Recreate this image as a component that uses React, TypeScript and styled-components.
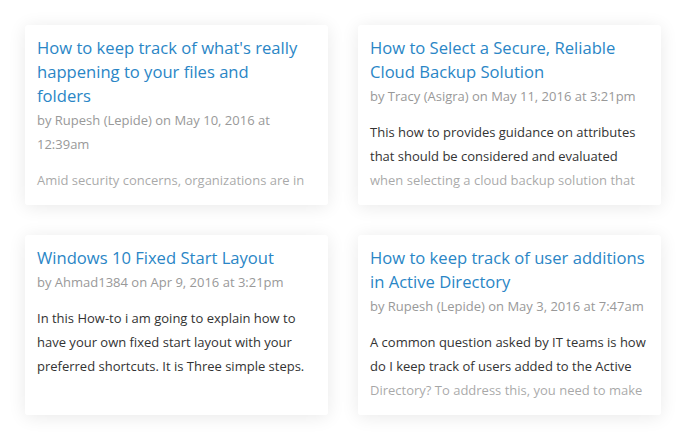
import styled, { createGlobalStyle } from "styled-components";

const GlobalStyle = createGlobalStyle`
  html, body {
    margin: 0;
    padding: 0;
    background: #ffffff;
  }
  body {
    font-family: "Open Sans", "Liberation Sans", sans-serif;
  }
`

const Grade = styled.div`
  display: grid;
  grid-template-columns: 303px 303px;
  grid-auto-rows: 180px;
  gap: 30px;
  padding: 25px;
`

const Cartao = styled.article`
  position: relative;
  overflow: hidden;
  background: #ffffff;
  border-radius: 3px;
  padding: 11px 12px;
  box-shadow: 0 2px 18px rgba(0, 0, 0, 0.09);

  &::after {
    content: '';
    position: absolute;
    left: 0;
    right: 0;
    bottom: 0;
    height: 36px;
    background: linear-gradient(
      to bottom,
      rgba(255, 255, 255, 0.55) 0px,
      rgba(255, 255, 255, 0.6) 24px,
      #ffffff 24px
    );
  }
`

const Titulo = styled.h3`
  margin: 0;
  font-size: 16.6px;
  font-weight: 400;
  line-height: 24px;
  color: #2a86c6;
  white-space: pre-line;
`

const Autor = styled.p`
  margin: 0;
  font-size: 13px;
  line-height: 24px;
  color: #999999;
`

const Resumo = styled.p`
  margin: 12px 0 0;
  font-size: 13px;
  line-height: 24px;
  color: #333333;
`

type Artigo = {
  titulo: string;
  autor: string;
  resumo: string;
};

const artigos: Artigo[] = [
  {
    titulo: "How to keep track of what's really happening to your files and\nfolders",
    autor: "by Rupesh (Lepide) on May 10, 2016 at 12:39am",
    resumo: "Amid security concerns, organizations are in constant need of auditing their file servers.",
  },
  {
    titulo: "How to Select a Secure, Reliable Cloud Backup Solution",
    autor: "by Tracy (Asigra) on May 11, 2016 at 3:21pm",
    resumo: "This how to provides guidance on attributes that should be considered and evaluated when selecting a cloud backup solution that meets your needs.",
  },
  {
    titulo: "Windows 10 Fixed Start Layout",
    autor: "by Ahmad1384 on Apr 9, 2016 at 3:21pm",
    resumo: "In this How-to i am going to explain how to have your own fixed start layout with your preferred shortcuts. It is Three simple steps.",
  },
  {
    titulo: "How to keep track of user additions in Active Directory",
    autor: "by Rupesh (Lepide) on May 3, 2016 at 7:47am",
    resumo: "A common question asked by IT teams is how do I keep track of users added to the Active Directory? To address this, you need to make sure auditing is enabled.",
  },
];

const App: React.FC = () => {
  return (
    <>
      <GlobalStyle />
      <Grade>
        {artigos.map((artigo) => (
          <Cartao key={artigo.titulo}>
            <Titulo>{artigo.titulo}</Titulo>
            <Autor>{artigo.autor}</Autor>
            <Resumo>{artigo.resumo}</Resumo>
          </Cartao>
        ))}
      </Grade>
    </>
  )
};

export default App;
